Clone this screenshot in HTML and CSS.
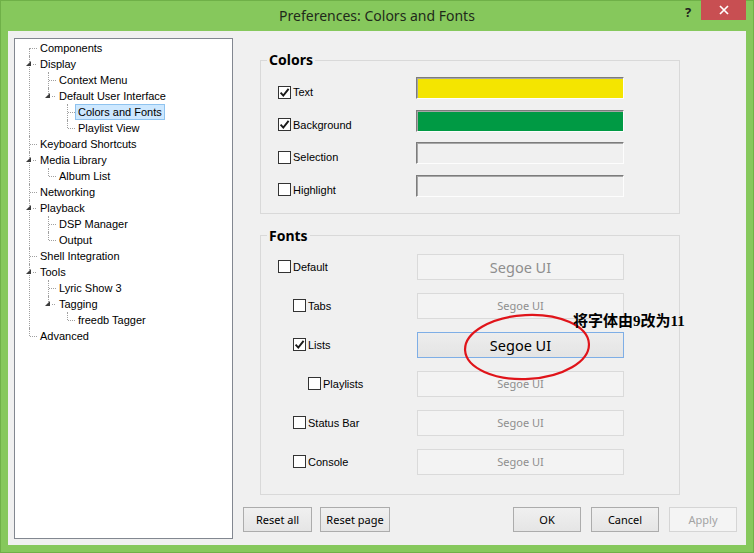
FILE: index.html
```html
<!DOCTYPE html>
<html>
<head>
    <meta charset="utf-8" />
    <title>Preferences: Colors and Fonts</title>
    <link rel="stylesheet" href="styles.css">
</head>
<body>
<div class="window">

    <!-- title bar -->
    <div class="titlebar">
        <span></span>
        <div class="title">Preferences: Colors and Fonts</div>
        <div class="controls">
            <span class="help">?</span>
            <span class="close">
                <svg width="10" height="10" viewBox="0 0 10 10"><path d="M1 1 L9 9 M9 1 L1 9" stroke="#fff" stroke-width="1.7" fill="none"/></svg>
            </span>
        </div>
    </div>

    <div class="client">
        <!-- page tree -->
        <div class="tree">
            <ul class="tree-root">
                <li><span class="node">Components</span></li>
                <li class="open"><span class="node">Display</span>
                    <ul>
                        <li><span class="node">Context Menu</span></li>
                        <li class="open"><span class="node">Default User Interface</span>
                            <ul>
                                <li><span class="node selected">Colors and Fonts</span></li>
                                <li><span class="node">Playlist View</span></li>
                            </ul>
                        </li>
                    </ul>
                </li>
                <li><span class="node">Keyboard Shortcuts</span></li>
                <li class="open"><span class="node">Media Library</span>
                    <ul>
                        <li><span class="node">Album List</span></li>
                    </ul>
                </li>
                <li><span class="node">Networking</span></li>
                <li class="open"><span class="node">Playback</span>
                    <ul>
                        <li><span class="node">DSP Manager</span></li>
                        <li><span class="node">Output</span></li>
                    </ul>
                </li>
                <li><span class="node">Shell Integration</span></li>
                <li class="open"><span class="node">Tools</span>
                    <ul>
                        <li><span class="node">Lyric Show 3</span></li>
                        <li class="open"><span class="node">Tagging</span>
                            <ul>
                                <li><span class="node">freedb Tagger</span></li>
                            </ul>
                        </li>
                    </ul>
                </li>
                <li><span class="node">Advanced</span></li>
            </ul>
        </div>

        <!-- preferences page -->
        <div class="page">
            <fieldset class="group colors">
                <legend>Colors</legend>
                <div class="rows">
                    <label class="check on"><span class="box"><svg width="11" height="11" viewBox="0 0 11 11"><path d="M1.6 5.6 L4.3 8.6 L9.6 1.8" stroke="#1a1a1a" stroke-width="1.9" fill="none"/></svg></span>Text</label>
                    <div class="swatch yellow"></div>
                    <label class="check on"><span class="box"><svg width="11" height="11" viewBox="0 0 11 11"><path d="M1.6 5.6 L4.3 8.6 L9.6 1.8" stroke="#1a1a1a" stroke-width="1.9" fill="none"/></svg></span>Background</label>
                    <div class="swatch green"></div>
                    <label class="check"><span class="box"></span>Selection</label>
                    <div class="swatch"></div>
                    <label class="check"><span class="box"></span>Highlight</label>
                    <div class="swatch"></div>
                </div>
            </fieldset>

            <fieldset class="group fonts">
                <legend>Fonts</legend>
                <div class="rows">
                    <label class="check"><span class="box"></span>Default</label>
                    <div class="fontbtn big">Segoe UI</div>
                    <label class="check indent1"><span class="box"></span>Tabs</label>
                    <div class="fontbtn">Segoe UI</div>
                    <label class="check indent1 on"><span class="box"><svg width="11" height="11" viewBox="0 0 11 11"><path d="M1.6 5.6 L4.3 8.6 L9.6 1.8" stroke="#1a1a1a" stroke-width="1.9" fill="none"/></svg></span>Lists</label>
                    <div class="fontbtn big active">Segoe UI</div>
                    <label class="check indent2"><span class="box"></span>Playlists</label>
                    <div class="fontbtn">Segoe UI</div>
                    <label class="check indent1"><span class="box"></span>Status Bar</label>
                    <div class="fontbtn">Segoe UI</div>
                    <label class="check indent1"><span class="box"></span>Console</label>
                    <div class="fontbtn">Segoe UI</div>
                </div>
            </fieldset>

            <div class="buttons">
                <div class="btn-group left">
                    <button class="btn w69">Reset all</button>
                    <button class="btn w70">Reset page</button>
                </div>
                <div class="btn-group right">
                    <button class="btn">OK</button>
                    <button class="btn">Cancel</button>
                    <button class="btn" disabled>Apply</button>
                </div>
            </div>
        </div>
    </div>

    <!-- annotation drawn over the screenshot -->
    <svg class="ring" width="132" height="72" viewBox="0 0 132 72">
        <ellipse cx="65" cy="35" rx="62" ry="32" stroke="#e0141a" stroke-width="2.2" fill="none" transform="rotate(-3 65 35)"/>
    </svg>
    <div class="note">将字体由9改为11</div>
</div>
</body>
</html>
```

FILE: styles.css
```css
body {
    margin: 0;
}

/* window frame */
.window {
    position: relative;
    width: 754px;
    height: 553px;
    background-color: #86c85c;
    display: flex;
    flex-direction: column;
    box-sizing: border-box;
    border: 1px solid #6fb048;
}

.titlebar {
    height: 30px;
    display: grid;
    grid-template-columns: 1fr auto 1fr;
    align-items: start;
}

.title {
    font-family: "Noto Sans", sans-serif;
    font-size: 14px;
    color: #1f2a1a;
    line-height: 30px;
}

.controls {
    justify-self: end;
    display: flex;
    align-items: flex-start;
    margin-right: 7px;
}

.help {
    width: 26px;
    height: 22px;
    line-height: 22px;
    text-align: center;
    font-family: "Noto Sans", sans-serif;
    font-weight: bold;
    font-size: 13px;
    color: #1f1f1f;
}

.close {
    width: 45px;
    height: 20px;
    margin-top: -1px;
    background-color: #c84f52;
    display: flex;
    align-items: center;
    justify-content: center;
}

/* client area */
.client {
    flex: 1;
    margin: 0 7px 7px 7px;
    background-color: #f0f0f0;
    display: flex;
    padding: 7px 0 6px 6px;
}

/* tree view */
.tree {
    width: 219px;
    box-sizing: border-box;
    background-color: #fff;
    border: 1px solid #828790;
    font-family: "Liberation Sans", Arial, sans-serif;
    font-size: 11px;
    color: #000;
}

.tree ul {
    list-style: none;
    margin: 0;
    padding: 0 0 0 19px;
}

.tree .tree-root {
    padding: 1px 0 0 14px;
}

.tree li {
    position: relative;
    line-height: 16px;
}

/* vertical dotted line */
.tree li:before {
    content: "";
    position: absolute;
    left: 0;
    top: 0;
    bottom: 0;
    border-left: 1px dotted #a0a0a0;
}

.tree li:last-child:before {
    bottom: auto;
    height: 8px;
}

.tree .tree-root > li:first-child:before {
    top: 8px;
}

/* horizontal dotted line */
.tree li:after {
    content: "";
    position: absolute;
    left: 1px;
    top: 8px;
    width: 7px;
    border-top: 1px dotted #a0a0a0;
}

/* expanded glyph */
.tree li.open > .node:before {
    content: "";
    position: absolute;
    left: -3px;
    top: 5px;
    width: 0;
    height: 0;
    border-left: 5px solid transparent;
    border-bottom: 5px solid #3c3c3c;
    z-index: 1;
}

.tree li.open:after {
    left: 4px;
    width: 3px;
}

.node {
    display: inline-block;
    margin-left: 8px;
    padding: 0 2px;
    line-height: 14px;
    border: 1px solid transparent;
    white-space: nowrap;
}

.node.selected {
    background-color: #cde8ff;
    border-color: #8fc3ef;
}

/* right page */
.page {
    flex: 1;
    display: flex;
    flex-direction: column;
}

.group {
    width: 420px;
    box-sizing: border-box;
    margin: 0 0 0 27px;
    border: 1px solid #d9d9d9;
    padding: 9px 0 16px 6px;
}

.group legend {
    padding: 0 2px;
    font-family: "Noto Sans", sans-serif;
    font-weight: bold;
    font-size: 14px;
    line-height: 16px;
    color: #000;
}

.colors {
    margin-top: 14px;
}

.fonts {
    margin-top: 14px;
    padding-top: 10px;
    padding-bottom: 19px;
}

.rows {
    display: grid;
    margin-left: 11px;
    align-items: center;
}

.colors .rows {
    grid-template-columns: 138px 208px;
    grid-auto-rows: 22px;
    row-gap: 10.5px;
}

.colors .check {
    padding-top: 8px;
}

.fonts .rows {
    grid-template-columns: 139px 207px;
    grid-auto-rows: 26px;
    row-gap: 13px;
}

/* checkbox */
.check {
    display: flex;
    align-items: center;
    font-family: "Liberation Sans", Arial, sans-serif;
    font-size: 11px;
    color: #000;
}

.check .box {
    width: 11px;
    height: 11px;
    border: 1px solid #333;
    background-color: #fff;
    margin-right: 2px;
    display: flex;
}

.indent1 {
    padding-left: 15px;
}

.indent2 {
    padding-left: 30px;
}

/* colour swatch */
.swatch {
    height: 22px;
    box-sizing: border-box;
    border: 1px solid;
    border-color: #7c7c7c #fdfdfd #fdfdfd #7c7c7c;
    box-shadow: inset 1px 1px 0 #a6a6a6;
    background-color: #f0f0f0;
}

.swatch.yellow {
    background-color: #f4e500;
}

.swatch.green {
    background-color: #009a44;
}

/* font picker buttons */
.fontbtn {
    height: 26px;
    box-sizing: border-box;
    border: 1px solid #dadada;
    background-color: #f3f3f3;
    color: #8e8e8e;
    font-family: "Noto Sans", sans-serif;
    font-size: 11px;
    display: flex;
    align-items: center;
    justify-content: center;
}

.fontbtn.big {
    font-size: 14.5px;
}

.fontbtn.active {
    border-color: #7eaee6;
    background: linear-gradient(#ededed, #e4e4e4);
    color: #000;
}

/* dialog buttons */
.buttons {
    margin-top: auto;
    display: flex;
    justify-content: space-between;
    padding: 0 9px 7px 10px;
}

.btn-group {
    display: flex;
}

.btn-group.left {
    gap: 8px;
}

.btn-group.right {
    gap: 10px;
}

.btn {
    width: 68px;
    height: 25px;
    border: 1px solid #acacac;
    background: linear-gradient(#f0f0f0, #e5e5e5);
    font-family: "Noto Sans", sans-serif;
    font-size: 11px;
    color: #000;
    padding: 0;
    margin: 0;
}

.btn.w69 {
    width: 69px;
}

.btn.w70 {
    width: 70px;
}

.btn:disabled {
    border-color: #d5d5d5;
    background: #f4f4f4;
    color: #a3a3a3;
}

/* red marker and note */
.ring {
    position: absolute;
    left: 461px;
    top: 311px;
}

.note {
    position: absolute;
    left: 572px;
    top: 311px;
    font-family: "Liberation Serif", "Noto Sans CJK SC", serif;
    font-weight: bold;
    font-size: 15px;
    line-height: 18px;
    color: #000;
    white-space: nowrap;
}
```
